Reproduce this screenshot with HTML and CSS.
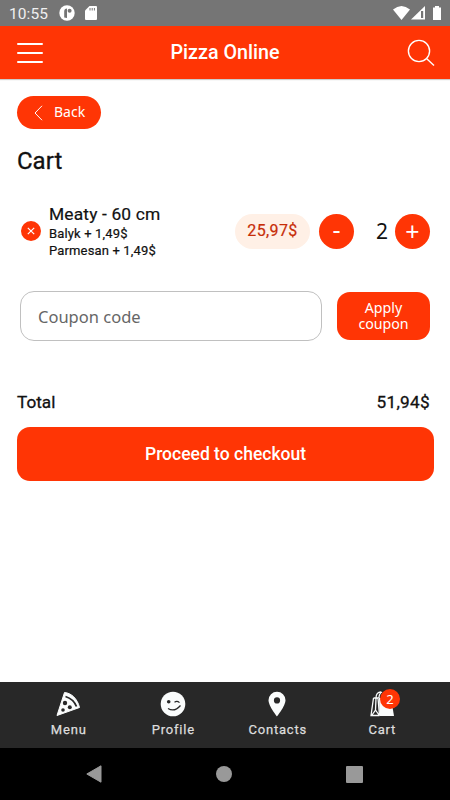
FILE: index.html
```html
<!DOCTYPE html>
<html lang="en">
<head>
    <meta charset="UTF-8">
    <meta name="viewport" content="width=device-width, initial-scale=1.0">
    <title>Pizza Online - Cart</title>
    <link rel="stylesheet" href="styles.css">
</head>
<body>

    <div class="status-bar">
        <span class="clock">10:55</span>
        <svg class="status-app" width="16" height="16" viewBox="0 0 16 16">
            <circle cx="8" cy="8" r="7.7" fill="#fff"/>
            <path d="M5.200 12.500V6.500a3 3 0 0 1 2.800-3v9.500z" fill="#757575"/>
            <circle cx="10.600" cy="5.800" r="2" fill="#757575"/>
        </svg>
        <svg width="12" height="14" viewBox="0 0 12 14">
            <path d="M4.500 0H11a1 1 0 0 1 1 1v12a1 1 0 0 1-1 1H1a1 1 0 0 1-1-1V4.500z" fill="#fff"/>
            <path d="M5 2v2.500M7.200 2v2.500M9.400 2v2.500" stroke="#757575" stroke-width="1"/>
        </svg>
        <svg class="status-right" width="50" height="16" viewBox="0 0 50 16">
            <path d="M1 4.500Q9.500-2.500 18 4.500L9.500 15z" fill="#fff"/>
            <path d="M33 1v13.500H19z" fill="#fff"/>
            <path d="M29 6h2.200v7H29z" fill="#757575"/>
            <path d="M41 2.500h2V1h4v1.500h2V15h-8z" fill="#fff"/>
        </svg>
    </div>

    <header class="header">
        <button class="icon-btn" aria-label="Menu">
            <svg width="26" height="22" viewBox="0 0 26 22">
                <path d="M1 2h24M1 11h24M1 20h24" stroke="#fff" stroke-width="2" stroke-linecap="round"/>
            </svg>
        </button>
        <h1>Pizza Online</h1>
        <button class="icon-btn" aria-label="Search">
            <svg width="28" height="28" viewBox="0 0 28 28" fill="none" stroke="#fff" stroke-width="1.400">
                <circle cx="12" cy="12" r="10.600"/>
                <path d="M19.500 19.500l7.500 7"/>
            </svg>
        </button>
    </header>

    <main class="content">
        <button class="back-btn">
            <svg width="9" height="16" viewBox="0 0 9 16">
                <path d="M8 .8L1 8l7 7.200" fill="none" stroke="#fff" stroke-width="1"/>
            </svg>
            <span>Back</span>
        </button>

        <h2>Cart</h2>

        <div class="cart-item">
            <button class="remove-btn" aria-label="Remove">
                <svg width="8" height="8" viewBox="0 0 8 8">
                    <path d="M.8.8l6.400 6.400M7.200.8L.8 7.200" stroke="#fff" stroke-width="1.200"/>
                </svg>
            </button>
            <div class="item-info">
                <p class="item-name">Meaty - 60 cm</p>
                <p class="item-extra">Balyk + 1,49$</p>
                <p class="item-extra">Parmesan + 1,49$</p>
            </div>
            <span class="item-price">25,97$</span>
            <button class="round-btn minus">-</button>
            <span class="item-count">2</span>
            <button class="round-btn">+</button>
        </div>

        <div class="coupon">
            <input type="text" class="coupon-input" placeholder="Coupon code">
            <button class="coupon-btn">Apply coupon</button>
        </div>

        <div class="total">
            <span>Total</span>
            <span class="total-sum">51,94$</span>
        </div>
        <button class="checkout-btn">Proceed to checkout</button>
    </main>

    <nav class="tabs">
        <a class="tab">
            <svg width="26" height="26" viewBox="0 0 26 26">
                <path d="M9.500 1.500C16.500 2 22.500 8 24.500 16.500L2 24.500z" fill="#fafcfc" stroke="#fafcfc" stroke-linejoin="round"/>
                <path d="M10.500 5.500q8 2.500 11 10" fill="none" stroke="#282828" stroke-width="1.800"/>
                <circle cx="10" cy="12" r="2.200" fill="#282828"/>
                <circle cx="14.800" cy="16.200" r="2" fill="#282828"/>
                <circle cx="8" cy="19" r="1.800" fill="#282828"/>
            </svg>
            <span>Menu</span>
        </a>
        <a class="tab">
            <svg width="26" height="26" viewBox="0 0 26 26">
                <circle cx="13" cy="13" r="12.300" fill="#fafcfc"/>
                <circle cx="8.700" cy="10.800" r="1.800" fill="#282828"/>
                <path d="M14.500 11.300q2.500-1.800 5 .3M8 17.500q6.500 4 12.500-3" fill="none" stroke="#282828" stroke-width="1.200"/>
            </svg>
            <span>Profile</span>
        </a>
        <a class="tab">
            <svg width="26" height="26" viewBox="0 0 26 26">
                <path d="M13 .8a8.500 8.500 0 0 0-8.500 8.500C4.500 15 13 25.500 13 25.500S21.500 15 21.500 9.300A8.500 8.500 0 0 0 13 .8zm0 5.500a3.100 3.100 0 1 1 0 6.200 3.100 3.100 0 0 1 0-6.200z" fill="#fafcfc"/>
            </svg>
            <span>Contacts</span>
        </a>
        <a class="tab">
            <svg width="26" height="26" viewBox="0 0 26 26">
                <path d="M10 7h12l3 18H10.500z" fill="#fafcfc"/>
                <path d="M4.500 7H9l1.500 17.500M4.500 7L2 24.500h8.500M7 7l-.5 12L3 24M6.500 19l3.500 5M7 7c0-4 2-6 5-6M10 7c0-3 1-5 3-6" fill="none" stroke="#fafcfc" stroke-width="1.300"/>
            </svg>
            <b class="badge">2</b>
            <span>Cart</span>
        </a>
    </nav>

    <div class="system-nav">
        <svg width="16" height="18" viewBox="0 0 16 18"><path d="M15 .8v16.400L.8 9z" fill="#999" stroke="#999" stroke-linejoin="round"/></svg>
        <svg width="16" height="16" viewBox="0 0 16 16"><circle cx="8" cy="8" r="8" fill="#999"/></svg>
        <svg width="17" height="17" viewBox="0 0 17 17"><rect width="17" height="17" rx="1" fill="#999"/></svg>
    </div>

</body>
</html>
```

FILE: styles.css
```css
* {
    box-sizing: border-box;
}

body {
    margin: 0;
    height: 800px;
    display: flex;
    flex-direction: column;
    background-color: #fff;
    color: #111;
    font-family: Roboto, sans-serif;
    overflow: hidden;
}

h1, h2, p {
    margin: 0;
    font-weight: 400;
}

button {
    border: none;
    padding: 0;
    background-color: #ff3505;
    color: #fff;
    font-family: "Noto Sans", sans-serif;
}

svg {
    display: block;
    flex-shrink: 0;
}

.status-bar {
    height: 26px;
    background-color: #757575;
    color: #fff;
    display: flex;
    align-items: center;
    padding: 0 8px 0 9px;
}

.clock {
    width: 50px;
    font-size: 15.5px;
    color: #f0f0f0;
    letter-spacing: 0.1px;
    padding-top: 1px;
}

.status-app {
    margin-right: 10px;
}

.status-right {
    margin-left: auto;
}

.header {
    height: 53px;
    background-color: #ff3505;
    color: #fff;
    display: flex;
    align-items: center;
    justify-content: space-between;
    padding: 0 15px 0 17px;
    box-shadow: 0 1px 1px rgba(0, 0, 0, 0.2);
}

.header h1 {
    font-size: 19.7px;
    line-height: 24px;
    font-weight: 500;
}

.icon-btn {
    background: none;
}

.content {
    flex: 1;
    padding: 17px 16px 0 17px;
}

.back-btn {
    width: 84px;
    height: 33px;
    border-radius: 17px;
    display: flex;
    align-items: center;
    gap: 11px;
    padding-left: 17px;
    font-size: 14px;
}

.back-btn span {
    padding-bottom: 2px;
}

.content h2 {
    margin-top: 17px;
    font-size: 24px;
    line-height: 30px;
    -webkit-text-stroke: 0.3px;
}

.cart-item {
    display: flex;
    align-items: center;
    height: 58px;
    margin-top: 26px;
    padding: 0 4px;
}

.remove-btn {
    width: 20px;
    height: 20px;
    border-radius: 50%;
    display: grid;
    place-items: center;
    margin-right: 8px;
}

.item-info {
    width: 186px;
    letter-spacing: 0.15px;
    -webkit-text-stroke: 0.2px;
}

.item-name {
    font-size: 17.4px;
    line-height: 21px;
}

.item-extra {
    font-size: 13px;
    line-height: 17px;
}

.item-price {
    width: 75px;
    height: 35px;
    border-radius: 18px;
    background-color: #fff0e6;
    color: #c72d08;
    font-size: 16px;
    line-height: 34px;
    letter-spacing: 0.4px;
    text-align: center;
    -webkit-text-stroke: 0.2px;
}

.round-btn {
    width: 35px;
    height: 35px;
    border-radius: 50%;
    font-size: 25px;
    line-height: 35px;
}

.minus {
    margin-left: 9px;
    padding-bottom: 4px;
    line-height: 31px;
}

.item-count {
    margin-left: auto;
    padding-right: 7px;
    font-family: "Noto Sans", sans-serif;
    font-size: 21px;
}

.coupon {
    display: flex;
    align-items: center;
    justify-content: space-between;
    margin-top: 31px;
    padding: 0 4px 0 3px;
}

.coupon-input {
    width: 302px;
    height: 50px;
    border: 1.5px solid #c0c0c0;
    border-radius: 14px;
    padding: 0 17px;
    font-family: "Noto Sans", sans-serif;
    font-size: 16.5px;
}

.coupon-input::placeholder {
    color: #666;
}

.coupon-btn {
    width: 93px;
    height: 48px;
    border-radius: 13px;
    padding: 0 16px;
    font-size: 14.2px;
    line-height: 16px;
}

.total {
    display: flex;
    justify-content: space-between;
    margin-top: 49px;
    padding-right: 4px;
    font-size: 17.2px;
    line-height: 24px;
    -webkit-text-stroke: 0.3px;
}

.total-sum {
    letter-spacing: 0.3px;
}

.checkout-btn {
    width: 417px;
    height: 54px;
    margin-top: 13px;
    border-radius: 13px;
    font-family: Roboto, sans-serif;
    font-size: 17.5px;
    font-weight: 500;
}

.tabs {
    height: 66px;
    background-color: #282828;
    display: grid;
    grid-template-columns: repeat(4, 104.5px);
    justify-content: center;
}

.tab {
    position: relative;
    display: flex;
    flex-direction: column;
    align-items: center;
    padding-top: 9px;
    color: #ddd;
    font-size: 13px;
    line-height: 16px;
    letter-spacing: 0.8px;
    -webkit-text-stroke: 0.25px;
    gap: 5px;
}

.tab span {
    padding-left: 1px;
}

.badge {
    position: absolute;
    top: 7px;
    left: 50.5px;
    width: 20px;
    height: 20px;
    border-radius: 50%;
    background-color: #ff3505;
    color: #fff;
    font-family: "Noto Sans", sans-serif;
    font-size: 13px;
    line-height: 20px;
    font-weight: 400;
    letter-spacing: 0;
    text-align: center;
    -webkit-text-stroke: 0;
}

.system-nav {
    height: 52px;
    background-color: #000;
    display: flex;
    align-items: center;
    justify-content: space-between;
    padding: 0 87px 0 86px;
}
```
